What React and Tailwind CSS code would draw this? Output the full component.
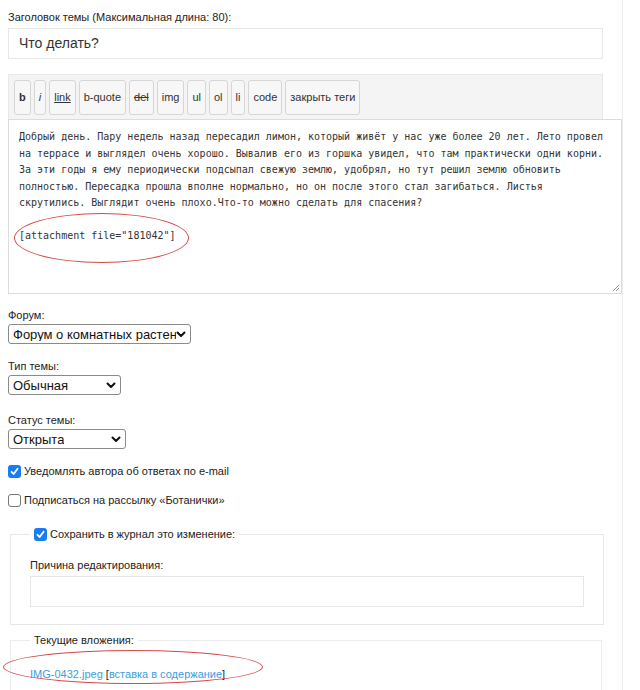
import React from 'react';

const sans = { fontFamily: '"Liberation Sans", Arial, sans-serif' };
const mono = { fontFamily: '"DejaVu Sans Mono", monospace' };

const tags = [
  { label: 'b', cls: 'font-bold' },
  { label: 'i', cls: 'italic' },
  { label: 'link', cls: 'underline' },
  { label: 'b-quote', cls: '' },
  { label: 'del', cls: 'line-through' },
  { label: 'img', cls: '' },
  { label: 'ul', cls: '' },
  { label: 'ol', cls: '' },
  { label: 'li', cls: '' },
  { label: 'code', cls: '' },
  { label: 'закрыть теги', cls: '' },
];

const lines = [
  'Добрый день. Пару недель назад пересадил лимон, который живёт у нас уже более 20 лет. Лето провел',
  'на террасе и выглядел очень хорошо. Вывалив его из горшка увидел, что там практически одни корни.',
  'За эти годы я ему периодически подсыпал свежую землю, удобрял, но тут решил землю обновить',
  'полностью. Пересадка прошла вполне нормально, но он после этого стал загибаться. Листья',
  'скрутились. Выглядит очень плохо.Что-то можно сделать для спасения?',
];

function Chevron() {
  return (
    <svg width="10" height="7" viewBox="0 0 10 7" className="shrink-0">
      <path d="M1.5 1.5 L5 5 L8.5 1.5" fill="none" stroke="#111" strokeWidth="2" strokeLinecap="round" strokeLinejoin="round" />
    </svg>
  );
}

function FakeSelect({ value, width }) {
  return (
    <div
      className={`flex h-[20px] items-center justify-between rounded-[3px] border border-[#8a8a8a] bg-white pl-[4px] pr-[4px] text-[13px] leading-none text-[#111] ${width}`}
    >
      <span className="overflow-hidden whitespace-nowrap">{value}</span>
      <Chevron />
    </div>
  );
}

function Checkbox({ checked }) {
  if (checked) {
    return (
      <span className="flex h-[13px] w-[13px] shrink-0 items-center justify-center rounded-[3px] bg-[#1a7cf2]">
        <svg width="9" height="9" viewBox="0 0 9 9">
          <path d="M1.5 4.8 L3.6 7 L7.6 1.8" fill="none" stroke="#fff" strokeWidth="1.8" strokeLinecap="round" strokeLinejoin="round" />
        </svg>
      </span>
    );
  }
  return <span className="h-[13px] w-[13px] shrink-0 rounded-[3px] border border-[#767676] bg-white" />;
}

export default function App() {
  return (
    <div className="min-h-[690px] w-[623px] border-r border-[#ececec] bg-white pl-[8px] text-[#222]" style={sans}>
      {/* Title */}
      <div className="pt-[10px] text-[11px] leading-[14px]">Заголовок темы (Максимальная длина: 80):</div>
      <div className="mt-[4px] flex h-[31px] w-[595px] items-center border border-[#e6e6e6] pl-[10px] text-[14px] text-[#333]">
        Что делать?
      </div>

      {/* Toolbar */}
      <div className="mt-[15px] flex w-[595px] gap-[3px] border border-b-0 border-[#e8e8e8] bg-[#f4f4f4] px-[5px] pt-[5px] pb-[4px]">
        {tags.map((t) => (
          <div
            key={t.label}
            className={`flex h-[35px] items-center rounded-[3px] border border-[#d6d6d6] bg-[#f7f7f7] px-[4px] text-[11px] text-[#333] ${t.cls}`}
          >
            {t.label}
          </div>
        ))}
      </div>

      {/* Textarea */}
      <div className="relative h-[175px] w-[614px] border border-[#dcdcdc] pl-[10px] pt-[9px] text-[10px] leading-[16.5px] text-[#333]" style={mono}>
        {lines.map((l) => (
          <div key={l} className="whitespace-pre">{l}</div>
        ))}
        <div className="h-[16.5px]" />
        <div className="whitespace-pre">[attachment file="181042"]</div>
        <div className="absolute left-[5px] top-[93px] h-[50px] w-[175px] rounded-[50%] border border-[#d44a4a]" />
        <svg className="absolute bottom-[1px] right-[1px]" width="8" height="8" viewBox="0 0 8 8">
          <path d="M1 7 L7 1 M4 7 L7 4" stroke="#999" strokeWidth="1" />
        </svg>
      </div>

      {/* Selects */}
      <div className="mt-[14px] text-[11px] leading-[14px]">Форум:</div>
      <div className="mt-[2px]">
        <FakeSelect value="Форум о комнатных растениях" width="w-[183px]" />
      </div>

      <div className="mt-[15px] text-[11px] leading-[14px]">Тип темы:</div>
      <div className="mt-[2px]">
        <FakeSelect value="Обычная" width="w-[113px]" />
      </div>

      <div className="mt-[18px] text-[11px] leading-[14px]">Статус темы:</div>
      <div className="mt-[2px]">
        <FakeSelect value="Открыта" width="w-[118px]" />
      </div>

      {/* Checkboxes */}
      <div className="mt-[15px] flex items-center gap-[3px] text-[11px] leading-[14px]">
        <Checkbox checked />
        <span>Уведомлять автора об ответах по e-mail</span>
      </div>
      <div className="mt-[15px] flex items-center gap-[3px] text-[11px] leading-[14px]">
        <Checkbox />
        <span>Подписаться на рассылку «Ботанички»</span>
      </div>

      {/* Edit log */}
      <fieldset className="ml-[2px] mt-[20px] w-[592px] border border-[#e6e6e6] px-[19px] pb-[17px]">
        <legend className="px-[4px]">
          <div className="flex items-center gap-[3px] text-[11px] leading-[14px]">
            <Checkbox checked />
            <span>Сохранить в журнал это изменение:</span>
          </div>
        </legend>
        <div className="mt-[17px] text-[11px] leading-[14px]">Причина редактирования:</div>
        <div className="mt-[4px] h-[31px] w-[554px] border border-[#e6e6e6]" />
      </fieldset>

      {/* Attachments */}
      <fieldset className="relative ml-[2px] mt-[8px] h-[60px] w-[592px] border border-b-0 border-[#ececec] px-[19px]">
        <legend className="px-[4px] text-[11px] leading-[14px]">Текущие вложения:</legend>
        <div className="mt-[20px] text-[11px] leading-[14px]">
          <span className="text-[#3b9de0]">IMG-0432.jpeg</span> [<span className="text-[#3b9de0]">вставка в содержание</span>]
        </div>
        <div className="absolute left-[-8px] top-[3px] h-[34px] w-[260px] rounded-[50%] border border-[#d44a4a]" />
      </fieldset>
    </div>
  );
}
